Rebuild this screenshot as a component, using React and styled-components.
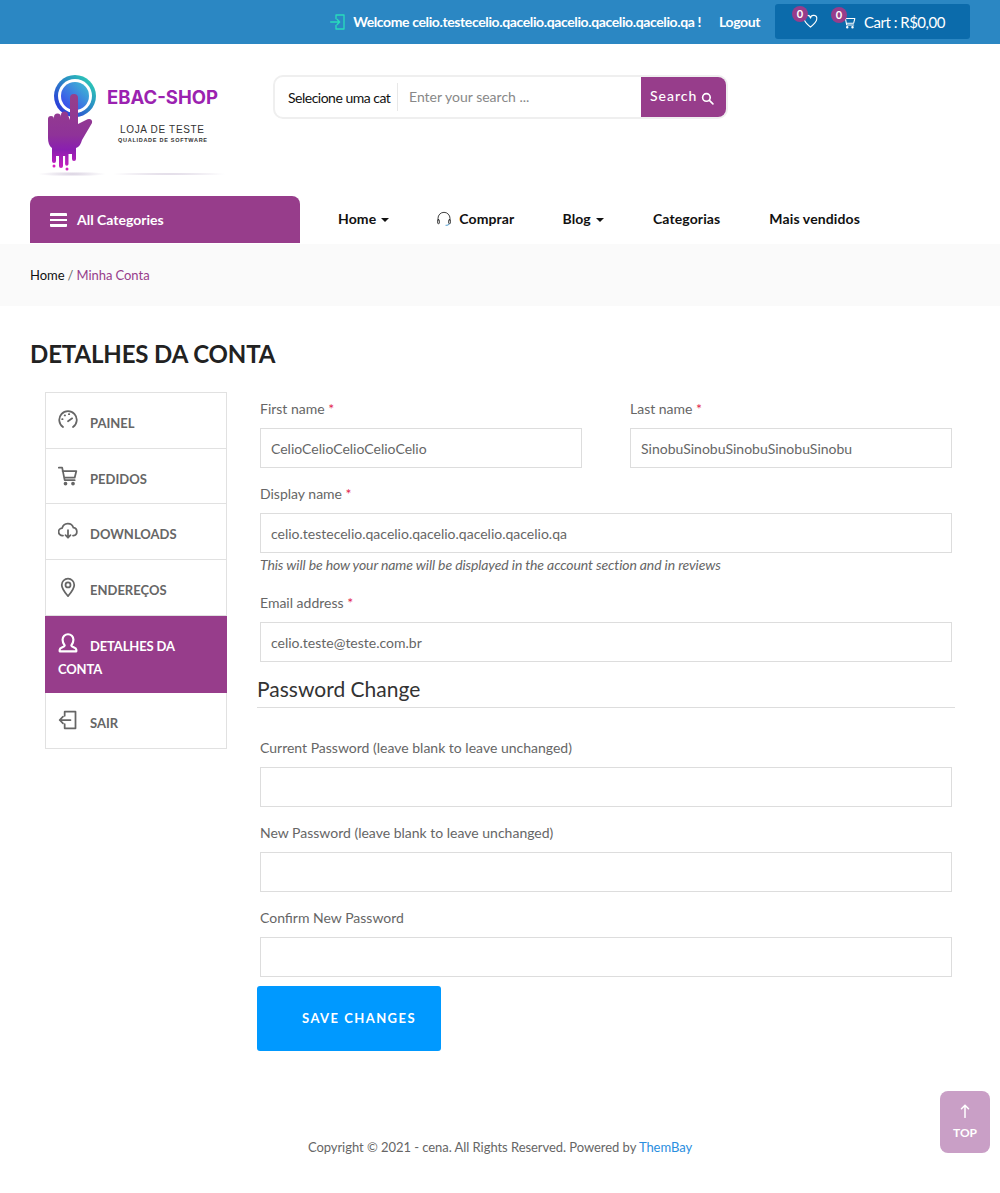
import React from "react";
import styled, { createGlobalStyle } from "styled-components";

const GlobalStyle = createGlobalStyle`
  * { box-sizing: border-box; }
  html, body { margin: 0; padding: 0; background: #fff; }
  body {
    font-family: Lato, "Liberation Sans", sans-serif;
    font-size: 14px;
    color: #555;
  }
`;

const purple = "#973d8b";

const Page = styled.div`
  width: 1000px;
  height: 1193px;
  position: relative;
  overflow: hidden;
`;

/* top bar */
const TopBar = styled.div`
  height: 44px;
  background: #2b87c3;
  display: flex;
  align-items: flex-start;
  justify-content: flex-end;
  padding: 4px 30px 0 0;
  color: #fff;
`;

const Welcome = styled.div`
  display: flex;
  align-items: center;
  height: 35px;
  font-weight: 700;
  font-size: 14px;
  letter-spacing: -0.38px;
  margin-right: 18px;
  svg { margin-right: 7px; }
`;

const Logout = styled.a`
  line-height: 35px;
  font-weight: 700;
  font-size: 14px;
  letter-spacing: -0.4px;
  margin-right: 15px;
`;

const CartBox = styled.div`
  width: 195px;
  height: 35px;
  background: #0b6bab;
  border-radius: 3px;
  display: flex;
  align-items: center;
  padding-left: 28px;
  font-size: 15px;
`;

const IconWrap = styled.div`
  position: relative;
  display: flex;
  margin-right: ${p => p.$gap}px;
`;

const Badge = styled.span`
  position: absolute;
  left: -11px;
  top: -8px;
  width: 16px;
  height: 16px;
  border-radius: 50%;
  background: ${purple};
  color: #fff;
  font-size: 11px;
  font-weight: 700;
  line-height: 15px;
  text-align: center;
`;

const CartText = styled.span`
  letter-spacing: -0.5px;
`;

/* logo + search */
const Header = styled.div`
  height: 152px;
  display: flex;
  padding-left: 36px;
`;

const LogoBox = styled.div`
  width: 237px;
  padding-top: 30px;
  svg { display: block; }
`;

const SearchBar = styled.div`
  margin-top: 31px;
  width: 455px;
  height: 44px;
  border: 2px solid #efefef;
  border-radius: 10px;
  display: flex;
  overflow: hidden;
`;

const SelectCat = styled.div`
  width: 123px;
  padding-left: 13px;
  flex: none;
  font-size: 14px;
  letter-spacing: -0.5px;
  color: #111;
  line-height: 42px;
  position: relative;
  &::after {
    content: "";
    position: absolute;
    right: 0;
    top: 6px;
    bottom: 6px;
    width: 1px;
    background: #e8e8e8;
  }
`;

const SearchInput = styled.div`
  flex: 1;
  padding-left: 11px;
  line-height: 40px;
  font-size: 14px;
  color: #888;
`;

const SearchButton = styled.div`
  width: 85px;
  background: ${purple};
  color: #fff;
  font-size: 14px;
  font-weight: 500;
  letter-spacing: 1px;
  display: flex;
  align-items: center;
  padding-left: 9px;
  padding-bottom: 3px;
  gap: 4px;
  svg { margin-top: 5px; }
`;

/* nav */
const NavRow = styled.div`
  height: 48px;
  display: flex;
  padding-left: 30px;
`;

const AllCategories = styled.div`
  width: 270px;
  height: 47px;
  background: ${purple};
  border-radius: 8px 8px 0 0;
  color: #fff;
  font-weight: 700;
  font-size: 14px;
  display: flex;
  align-items: center;
  padding-left: 20px;
  gap: 10px;
`;

const Burger = styled.span`
  width: 17px;
  height: 14px;
  border-top: 3px solid #fff;
  border-bottom: 3px solid #fff;
  border-radius: 1px;
  position: relative;
  &::after {
    content: "";
    position: absolute;
    left: 0;
    right: 0;
    top: 3px;
    height: 2px;
    background: #fff;
  }
`;

const Nav = styled.nav`
  display: flex;
  align-items: center;
  height: 45px;
  margin-left: 38px;
  color: #111;
  font-size: 14px;
  font-weight: 700;
  letter-spacing: 0.12px;
`;

const NavItem = styled.a`
  display: flex;
  align-items: center;
  margin-right: ${p => p.$gap}px;
  svg { margin-right: 7px; }
`;

const Caret = styled.span`
  width: 0;
  height: 0;
  margin-left: 5px;
  margin-top: 2px;
  border-left: 4px solid transparent;
  border-right: 4px solid transparent;
  border-top: 4px solid #111;
`;

const Breadcrumb = styled.div`
  height: 62px;
  background: #fafafa;
  padding-left: 30px;
  line-height: 62px;
  font-size: 13px;
  word-spacing: -0.4px;
  color: #111;
  span { color: #666; }
  b { color: ${purple}; font-weight: 400; }
`;

const Title = styled.h1`
  margin: 32px 0 0 30px;
  font-size: 24px;
  line-height: 32px;
  font-weight: 700;
  letter-spacing: -0.12px;
  color: #222;
  height: 54px;
`;

const Content = styled.div`
  display: flex;
  padding-left: 45px;
`;

/* sidebar */
const Sidebar = styled.ul`
  list-style: none;
  margin: 0;
  padding: 0;
  width: 182px;
  height: 357px;
  border: 1px solid #e1e1e1;
  flex: none;
`;

const SideItem = styled.li`
  height: ${p => p.$h}px;
  margin: ${p => (p.$active ? "0 -1px" : "0")};
  padding: ${p => (p.$active ? "19px 13px 0" : "19px 12px 0")};
  background: ${p => (p.$active ? purple : "#fff")};
  color: ${p => (p.$active ? "#fff" : "#666")};
  border-bottom: ${p => (p.$last || p.$active ? "none" : "1px solid #e1e1e1")};
  font-size: 13px;
  font-weight: 700;
  line-height: 23px;
  letter-spacing: ${p => (p.$active ? "-0.15px" : "0")};
  svg {
    display: inline-block;
    vertical-align: -2px;
    margin-right: 12px;
    margin-top: -6px;
  }
`;

/* form */
const Form = styled.div`
  margin-left: 30px;
  width: 698px;
`;

const Fields = styled.div`
  padding: 0 3px;
`;

const Row = styled.div`
  display: flex;
  justify-content: space-between;
`;

const Field = styled.div`
  width: ${p => p.$w || "100%"};
  margin-bottom: ${p => p.$mb ?? 16}px;
`;

const Label = styled.label`
  display: block;
  height: 36px;
  line-height: 34px;
  font-size: 14px;
  color: #666;
  em { color: #e2264d; font-style: normal; }
`;

const Input = styled.div`
  height: 40px;
  border: 1px solid #ddd;
  padding-left: 10px;
  line-height: 40px;
  font-size: 14px;
  color: #666;
  background: #fff;
`;

const Hint = styled.div`
  font-style: italic;
  color: #666;
  font-size: 14px;
  line-height: 24px;
  letter-spacing: -0.12px;
`;

const SectionTitle = styled.h3`
  margin: 10px 0 23px;
  height: 36px;
  font-size: 21px;
  line-height: 34px;
  font-weight: 400;
  color: #333;
  border-bottom: 1px solid #ddd;
`;

const SaveButton = styled.div`
  width: 184px;
  height: 65px;
  margin-top: -7px;
  background: #0099ff;
  border-radius: 3px;
  color: #fff;
  font-weight: 700;
  font-size: 13px;
  letter-spacing: 1.45px;
  line-height: 64px;
  padding-left: 45px;
`;

const Copyright = styled.div`
  position: absolute;
  left: 0;
  right: 0;
  top: 1138px;
  text-align: center;
  font-size: 13px;
  line-height: 18px;
  color: #666;
  letter-spacing: -0.05px;
  a { color: #2a8ee0; }
`;

const TopButton = styled.div`
  position: fixed;
  left: 940px;
  top: 1091px;
  width: 50px;
  height: 62px;
  border-radius: 8px;
  background: #c99fc6;
  color: #fff;
  font-size: 12px;
  font-weight: 700;
  text-align: center;
  padding-top: 13px;
  svg { display: block; margin: 0 auto 7px; }
`;

const Stroke = ({ size = 24, color = "#666", sw = 2.1, children, box = "0 0 24 24" }) => (
  <svg width={size} height={size} viewBox={box} fill="none" stroke={color} strokeWidth={sw} strokeLinecap="round" strokeLinejoin="round">
    {children}
  </svg>
);

const GaugeIcon = () => (
  <Stroke size={20}>
    <path d="M6 20.5A10.5 10.5 0 1 1 18 20.5" />
    <path d="M12 13.5l5-3.5" />
    <path d="M5 11h.5M8 6.5h.5M13 5h.5" />
  </Stroke>
);
const CartIcon = ({ color = "#666", size = 20, sw = 2.1 }) => (
  <Stroke size={size} color={color} sw={sw}>
    <path d="M1 2h4l3 15h12" />
    <path d="M5.5 6H22l-2 8H8" />
    <circle cx="9" cy="21" r="1.2" fill={color} />
    <circle cx="18" cy="21" r="1.2" fill={color} />
  </Stroke>
);
const CloudIcon = () => (
  <Stroke size={20}>
    <path d="M6 17.5H5.5a4.5 4.5 0 0 1-.5-9A7 7 0 0 1 18.5 8a4.8 4.8 0 0 1 0 9.5H18" />
    <path d="M12 11v9M9 17l3 3 3-3" />
  </Stroke>
);
const PinIcon = () => (
  <Stroke size={20}>
    <path d="M12 23C8 18 4.5 14 4.5 9.5a7.5 7.5 0 0 1 15 0C19.500 14 16 18 12 23z" />
    <circle cx="12" cy="9.500" r="3" />
  </Stroke>
);
const UserIcon = () => (
  <Stroke size={20} color="#fff" sw={2.6}>
    <path d="M8 15c-1.500-2-2.500-4-2.500-7a6.500 6.500 0 0 1 13 0c0 3-1 5-2.500 7 0 2 6 2.500 6 5v2H2v-2c0-2.500 6-3 6-5z" />
  </Stroke>
);
const ExitIcon = () => (
  <Stroke size={20}>
    <path d="M8 7V2h13v20H8v-5" />
    <path d="M15 12H2M6 8l-4 4 4 4" />
  </Stroke>
);
const HeartIcon = () => (
  <Stroke size={15} color="#fff" sw={1.8}>
    <path d="M12 21C6 16 2 12.500 2 8a5 5 0 0 1 10-1.500A5 5 0 0 1 22 8c0 4.500-4 8-10 13z" />
  </Stroke>
);
const SearchIcon = () => (
  <Stroke size={13} color="#fff" sw={3}>
    <circle cx="10" cy="10" r="7" />
    <path d="M15.500 15.500L22 22" />
  </Stroke>
);
const LoginIcon = () => (
  <Stroke size={16} color="#29dcbc" sw={2}>
    <path d="M9 7V1.500h12v21H9V17" />
    <path d="M1 12h13M10.500 8l4 4-4 4" />
  </Stroke>
);
const HeadsetIcon = () => (
  <Stroke size={16} color="#222" sw={1.3}>
    <path d="M3 14v-3a9 9 0 0 1 18 0v3" />
    <rect x="2.500" y="13" width="2.500" height="6" rx="1" />
    <rect x="19" y="13" width="2.500" height="6" rx="1" />
    <path d="M20 19.500c-1 1.500-3 2-5 2" stroke="#2b87c3" />
  </Stroke>
);
const UpArrow = () => (
  <Stroke size={14} color="#fff" sw={2.6}>
    <path d="M12 23V2M6 8l6-6 6 6" />
  </Stroke>
);

const Logo = () => (
  <svg width="190" height="120" viewBox="0 0 190 120">
    <defs>
      <linearGradient id="ring" x1="0" y1="1" x2="1" y2="0">
        <stop offset="0" stopColor="#2b1fe0" />
        <stop offset="1" stopColor="#2be0b0" />
      </linearGradient>
      <linearGradient id="inner" x1="0" y1="1" x2="1" y2="0">
        <stop offset="0" stopColor="#3a3cf0" />
        <stop offset="1" stopColor="#3fc4d0" />
      </linearGradient>
      <linearGradient id="hand" x1="0" y1="0" x2="0" y2="1">
        <stop offset="0" stopColor="#96408a" />
        <stop offset="0.55" stopColor="#8f3398" />
        <stop offset="0.75" stopColor="#8a1fb0" />
        <stop offset="1" stopColor="#c81fc0" />
      </linearGradient>
      <radialGradient id="shade">
        <stop offset="0" stopColor="#d8d0e0" />
        <stop offset="1" stopColor="#ffffff" />
      </radialGradient>
    </defs>
    <circle cx="39" cy="22" r="21" fill="url(#ring)" />
    <circle cx="39" cy="22" r="17" fill="#fff" />
    <circle cx="39" cy="22" r="14" fill="url(#inner)" />
    <path
      d="M34 24a4 4 0 0 1 8 0V50L50 46C53 44 57 45 56 49L46 66C45 70 43 73 40 74V85a2 2 0 0 1-4 0V80H32.500V90a1.700 1.700 0 0 1-3.400 0V82H27V92a2 2 0 0 1-4 0V82H20V87a2 2 0 0 1-4 0V74C13 72 12 68 12 64V45a3 3 0 0 1 6 0V43a3.500 3.500 0 0 1 7 0V41a3.500 3.500 0 0 1 7 0L34 46z"
      fill="url(#hand)"
    />
    <circle cx="18" cy="92" r="1.500" fill="#d81fc0" />
    <circle cx="31" cy="95" r="1.500" fill="#d81fc0" />
    <ellipse cx="36" cy="100" rx="34" ry="2.500" fill="url(#shade)" />
    <ellipse cx="133" cy="100" rx="60" ry="1.500" fill="url(#shade)" />
    <text x="71" y="30" fontFamily="Inter, 'Liberation Sans', sans-serif" fontWeight="700" fontSize="18.500" fill="#9b22b0" textLength="111">EBAC-SHOP</text>
    <text x="84" y="59" fontFamily="'Liberation Sans', sans-serif" fontSize="10" fill="#333" textLength="84">LOJA DE TESTE</text>
    <text x="82" y="67.500" fontFamily="'Liberation Sans', sans-serif" fontWeight="700" fontSize="5.500" fill="#333" textLength="89">QUALIDADE DE SOFTWARE</text>
  </svg>
);

const menu = [
  { label: "PAINEL", icon: <GaugeIcon />, h: 56 },
  { label: "PEDIDOS", icon: <CartIcon />, h: 55 },
  { label: "DOWNLOADS", icon: <CloudIcon />, h: 56 },
  { label: "ENDEREÇOS", icon: <PinIcon />, h: 56 },
  { label: "DETALHES DA CONTA", icon: <UserIcon />, h: 77, active: true },
  { label: "SAIR", icon: <ExitIcon />, h: 55, last: true },
];

const Req = () => <em> *</em>;

const App = () => (
  <Page>
    <GlobalStyle />
    <TopBar>
      <Welcome>
        <LoginIcon />
        Welcome celio.testecelio.qacelio.qacelio.qacelio.qacelio.qa !
      </Welcome>
      <Logout>Logout</Logout>
      <CartBox>
        <IconWrap $gap={24}>
          <Badge>0</Badge>
          <HeartIcon />
        </IconWrap>
        <IconWrap $gap={8}>
          <Badge>0</Badge>
          <CartIcon color="#fff" size={14} sw={1.8} />
        </IconWrap>
        <CartText>Cart : R$0,00</CartText>
      </CartBox>
    </TopBar>

    <Header>
      <LogoBox>
        <Logo />
      </LogoBox>
      <SearchBar>
        <SelectCat>Selecione uma cat</SelectCat>
        <SearchInput>Enter your search ...</SearchInput>
        <SearchButton>
          Search
          <SearchIcon />
        </SearchButton>
      </SearchBar>
    </Header>

    <NavRow>
      <AllCategories>
        <Burger />
        All Categories
      </AllCategories>
      <Nav>
        <NavItem $gap={47}>Home<Caret /></NavItem>
        <NavItem $gap={48}><HeadsetIcon />Comprar</NavItem>
        <NavItem $gap={49}>Blog<Caret /></NavItem>
        <NavItem $gap={49}>Categorias</NavItem>
        <NavItem>Mais vendidos</NavItem>
      </Nav>
    </NavRow>

    <Breadcrumb>
      Home <span>/</span> <b>Minha Conta</b>
    </Breadcrumb>

    <Title>DETALHES DA CONTA</Title>

    <Content>
      <Sidebar>
        {menu.map(m => (
          <SideItem key={m.label} $h={m.h} $active={m.active} $last={m.last}>
            {m.icon}
            {m.label}
          </SideItem>
        ))}
      </Sidebar>

      <Form>
        <Fields>
          <Row>
            <Field $w="322px" $mb={9}>
              <Label>First name<Req /></Label>
              <Input>CelioCelioCelioCelioCelio</Input>
            </Field>
            <Field $w="322px" $mb={9}>
              <Label>Last name<Req /></Label>
              <Input>SinobuSinobuSinobuSinobuSinobu</Input>
            </Field>
          </Row>
          <Field $mb={9}>
            <Label>Display name<Req /></Label>
            <Input>celio.testecelio.qacelio.qacelio.qacelio.qacelio.qa</Input>
            <Hint>This will be how your name will be displayed in the account section and in reviews</Hint>
          </Field>
          <Field $mb={0}>
            <Label>Email address<Req /></Label>
            <Input>celio.teste@teste.com.br</Input>
          </Field>
        </Fields>
        <SectionTitle>Password Change</SectionTitle>
        <Fields>
          <Field $mb={9}>
            <Label>Current Password (leave blank to leave unchanged)</Label>
            <Input />
          </Field>
          <Field $mb={9}>
            <Label>New Password (leave blank to leave unchanged)</Label>
            <Input />
          </Field>
          <Field>
            <Label>Confirm New Password</Label>
            <Input />
          </Field>
        </Fields>
        <SaveButton>SAVE CHANGES</SaveButton>
      </Form>
    </Content>

    <Copyright>
      Copyright © 2021 - cena. All Rights Reserved. Powered by <a>ThemBay</a>
    </Copyright>

    <TopButton>
      <UpArrow />
      TOP
    </TopButton>
  </Page>
);

export default App;
